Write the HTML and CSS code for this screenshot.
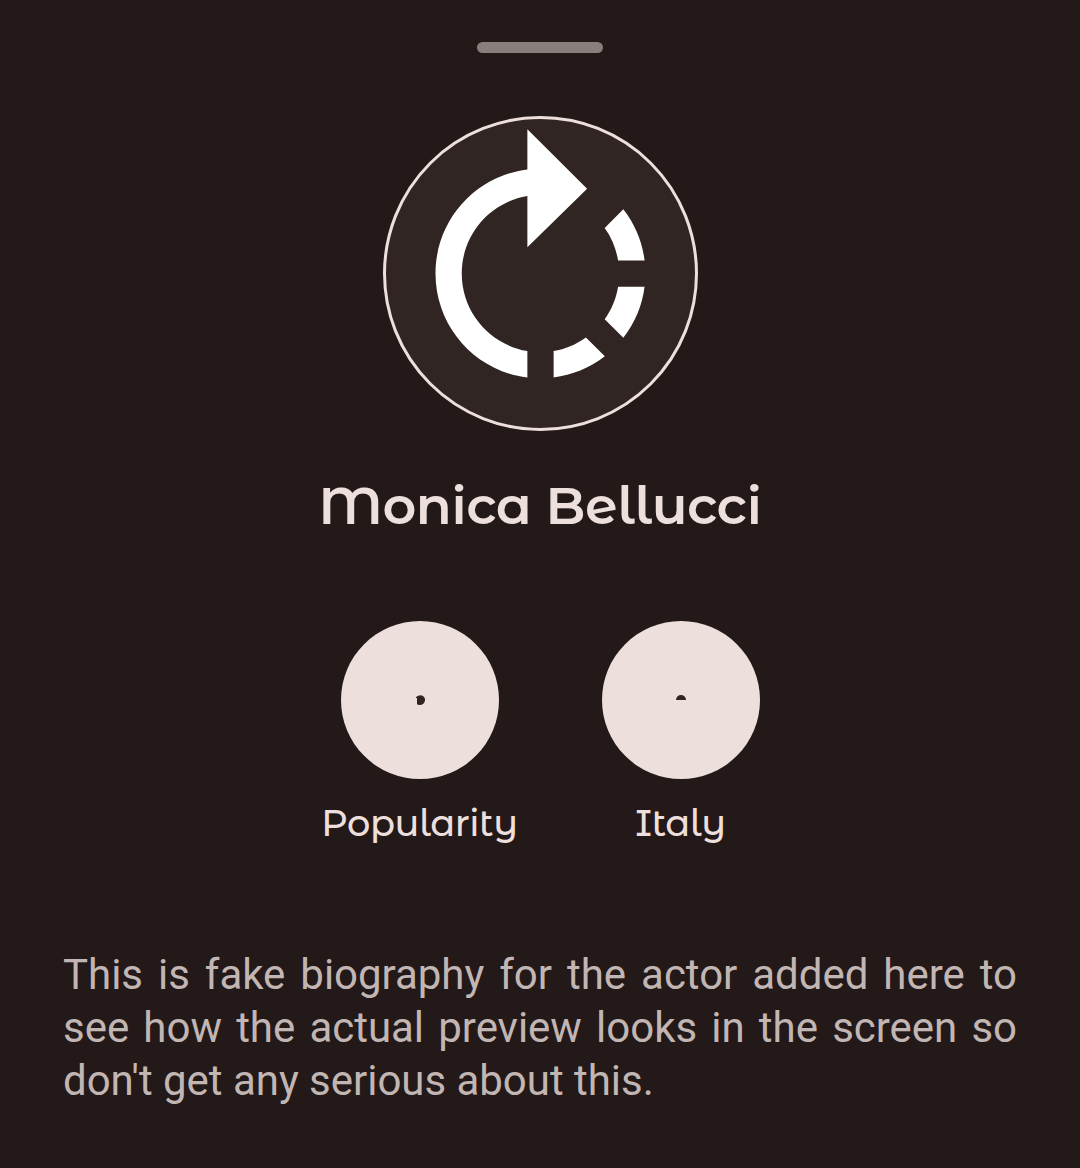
FILE: index.html
```html
<!DOCTYPE html>
<html lang="en">
<head>
<meta charset="utf-8">
<title>Monica Bellucci</title>
<link rel="stylesheet" href="styles.css">
</head>
<body>
<main class="sheet">
  <div class="handle"></div>
  <div class="avatar">
    <svg viewBox="0 0 24 24" class="avatar-icon"><path d="M15.55 5.55L11 1v3.07C7.06 4.56 4 7.92 4 12s3.05 7.44 7 7.93v-2.02c-2.84-.48-5-2.94-5-5.91s2.16-5.43 5-5.91V10l4.55-4.45zM19.93 11c-.17-1.39-.72-2.73-1.62-3.89l-1.42 1.42c.54.75.88 1.6 1.02 2.47h2.02zM13 17.9v2.02c1.39-.17 2.74-.71 3.9-1.61l-1.44-1.44c-.75.54-1.59.89-2.46 1.03zm3.89-2.42l1.42 1.41c.9-1.16 1.45-2.5 1.62-3.89h-2.02c-.14.87-.48 1.72-1.02 2.48z"/></svg>
  </div>
  <h1 class="name">Monica Bellucci</h1>
  <section class="stats">
    <div class="stat">
      <div class="disc"><svg viewBox="0 0 158 158"><path d="M75 76q4-3 7-1a5 5 0 0 1-3 9q-3 0-3-1v-6h-1z"/></svg></div>
      <span class="label">Popularity</span>
    </div>
    <div class="stat">
      <div class="disc"><svg viewBox="0 0 158 158"><path d="M74 79a5 5 0 0 1 10 0z"/></svg></div>
      <span class="label">Italy</span>
    </div>
  </section>
  <p class="bio">This is fake biography for the actor added here to see how the actual preview looks in the screen so don't get any serious about this.</p>
</main>
</body>
</html>
```
FILE: styles.css
```css
* { box-sizing: border-box; }
body { margin: 0; background: #231918; color: #eddfdc; }
.sheet { width: 1080px; height: 1168px; padding: 42px 63px 0; display: flex; flex-direction: column; align-items: center; }
.handle { width: 126px; height: 11px; border-radius: 6px; background: #887e7b; }
.avatar { width: 315px; height: 315px; margin-top: 63px; border: 3px solid #eddfdc; border-radius: 50%; background: #312523; display: flex; align-items: center; justify-content: center; }
.avatar-icon { width: 315px; height: 315px; flex: none; fill: #fff; }
.name { margin: 39px 0 0; height: 70px; font: 600 52.5px/70px "Montserrat Alternates", Montserrat, sans-serif; letter-spacing: -0.42px; white-space: nowrap; }
.stats { display: flex; gap: 41px; margin: 81px 0 0 20px; }
.stat { width: 220px; display: flex; flex-direction: column; align-items: center; }
.disc { width: 158px; height: 158px; border-radius: 50%; background: #eddfdc; }
.disc svg { display: block; fill: #312523; }
.label { margin-top: 22px; height: 50px; font: 500 36.75px/44px "Montserrat Alternates", Montserrat, sans-serif; letter-spacing: -0.4px; }
.bio { width: 954px; margin: 97px 0 0; color: #c2b6b4; font: 400 42px/53px Roboto, sans-serif; letter-spacing: -0.03px; text-align: justify; }
```
